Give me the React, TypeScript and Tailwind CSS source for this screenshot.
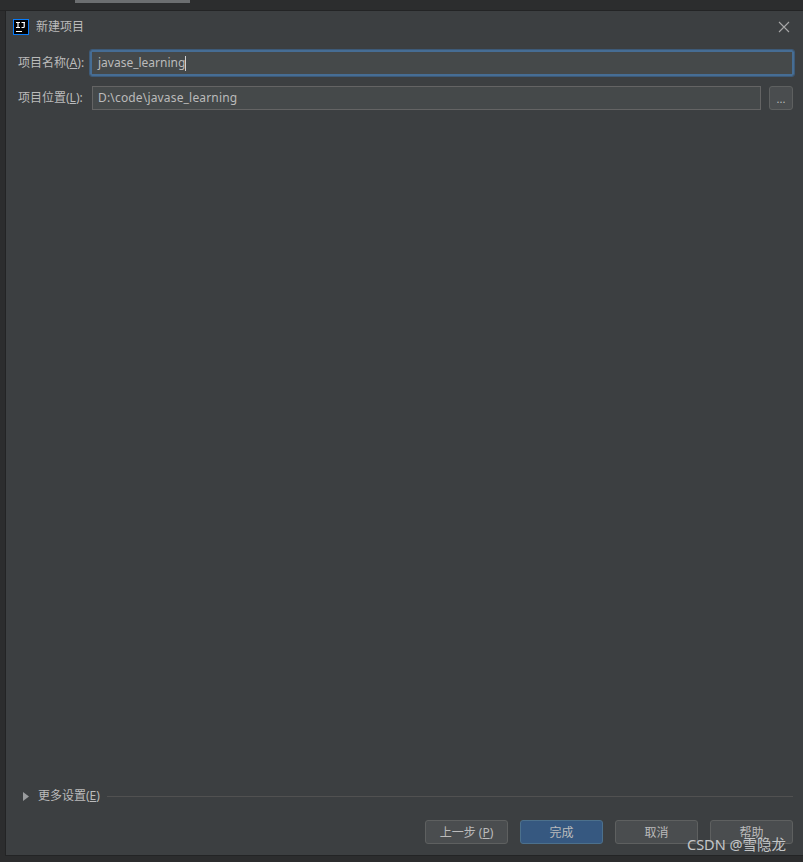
import React from "react";

const font = { fontFamily: '"Noto Sans", "Noto Sans CJK SC", sans-serif' };

function IdeaIcon() {
  return (
    <svg width="16" height="16" viewBox="0 0 16 16" className="shrink-0">
      <rect x="0.5" y="0.5" width="15" height="15" fill="#000" stroke="#087cfa" />
      <path d="M3 3.5h4M5 3.5v5M3 8.5h4M8.5 3.5h3.5M11.2 3.5v4.3q0 .7-.8.7H8.5M3 12.5h6" stroke="#fff" strokeWidth="1.2" fill="none" />
    </svg>
  );
}

function FooterButton({ children, primary }: { children: React.ReactNode; primary?: boolean }) {
  return (
    <button
      className={`w-[83px] h-6 pt-px rounded-[3px] border text-[12px] leading-none ${
        primary ? "bg-[#365880] border-[#4c708c] text-[#bbbbbb]" : "bg-[#4a4d4f] border-[#5e6060] text-[#bbbbbb]"
      }`}
    >
      {children}
    </button>
  );
}

export default function App() {
  return (
    <div className="relative w-[803px] h-[862px] flex flex-col bg-[#2c2d2e] overflow-hidden text-[#bbbbbb] text-[12px]" style={font}>
      {/* strip of the IDE window behind the dialog */}
      <div className="h-[11px] shrink-0 flex pl-[75px] border-b border-[#232425]">
        <div className="w-[115px] h-[3px] bg-[#6c6e70]" />
      </div>

      <div className="flex-1 ml-[5px] flex flex-col bg-[#3c3f41] border-l border-b border-[#232425] min-h-0">
        {/* title bar */}
        <div className="h-[30px] mt-px shrink-0 flex items-center pl-[7px] pr-[13px]">
          <IdeaIcon />
          <span className="ml-[7px]">新建项目</span>
          <svg width="12" height="12" viewBox="0 0 12 12" className="ml-auto" stroke="#a8a8a8" strokeWidth="1.1">
            <path d="M1 1l10 10M11 1L1 11" />
          </svg>
        </div>

        {/* form */}
        <div className="flex items-center mt-[8px] pl-[12px] pr-[9px] h-[26px] shrink-0">
          <label className="w-[72px] shrink-0">
            项目名称(<span className="underline">A</span>):
          </label>
          <div className="flex-1 h-[26px] flex items-center pl-[6px] bg-[#45494a] border-2 border-[#466d94] rounded-[2px] outline outline-[#3d5a78]">
            <span>javase_learning</span>
            <span className="w-px h-[15px] bg-[#d0d0d0]" />
          </div>
        </div>
        <div className="flex items-center mt-[10px] pl-[12px] pr-[10px] h-6 shrink-0">
          <label className="w-[74px] shrink-0">
            项目位置(<span className="underline">L</span>):
          </label>
          <div className="flex-1 h-6 flex items-center pl-[5px] bg-[#45494a] border border-[#646464] tracking-[0.17px]">D:\code\javase_learning</div>
          <button className="ml-2 w-6 h-6 bg-[#4a4d4f] border border-[#5e6060] rounded-[3px] text-[11px] leading-none">...</button>
        </div>

        <div className="flex-1" />

        {/* more settings */}
        <div className="flex items-center h-4 shrink-0 pl-[17px] pr-[10px] mb-[16px]">
          <svg width="6" height="9" viewBox="0 0 6 9" className="shrink-0">
            <path d="M0 0l6 4.5L0 9z" fill="#9a9c9e" />
          </svg>
          <span className="ml-[9px]">
            更多设置(<span className="underline">E</span>)
          </span>
          <div className="flex-1 h-px bg-[#515151] ml-[7px]" />
        </div>

        {/* footer */}
        <div className="flex justify-end gap-[12px] pr-[10px] mb-[11px] shrink-0">
          <FooterButton>
            上一步 (<span className="underline">P</span>)
          </FooterButton>
          <FooterButton primary>完成</FooterButton>
          <FooterButton>取消</FooterButton>
          <FooterButton>帮助</FooterButton>
        </div>
      </div>
      <div className="h-[6px] shrink-0" />

      {/* CSDN watermark */}
      <span className="absolute left-[687px] top-[835px] text-[14.5px] leading-[18px] text-[#c4c6c8] whitespace-nowrap">CSDN @雪隐龙</span>
    </div>
  );
}
